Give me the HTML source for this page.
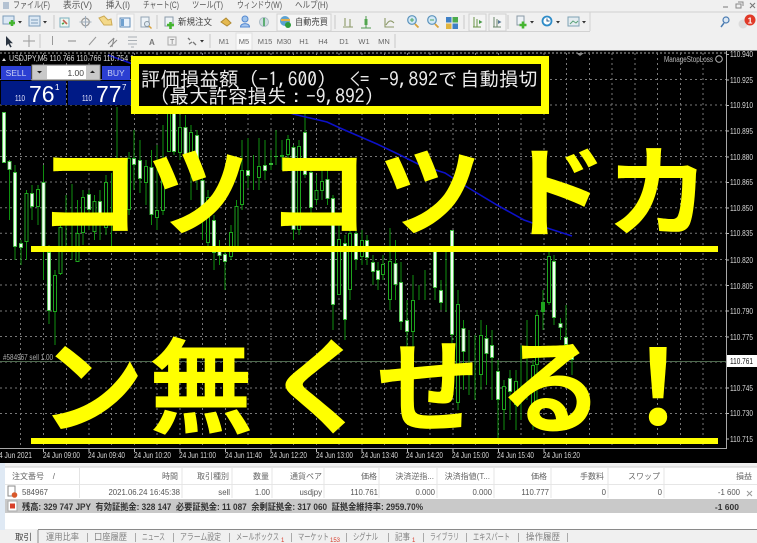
<!DOCTYPE html>
<html lang="ja">
<head>
<meta charset="utf-8">
<title>MT4</title>
<style>
html,body{margin:0;padding:0;background:#f0f0f0;width:757px;height:543px;overflow:hidden}
svg{display:block;position:absolute;left:0;top:0}
.m{font:9px "Liberation Sans","Noto Sans CJK JP",sans-serif;fill:#555}
.s{font:7.5px "Liberation Sans",sans-serif;fill:#666}
.ax{font:7.8px "Liberation Sans",sans-serif;fill:#d8d8d8}
.t{font:7.8px "Liberation Sans",sans-serif;fill:#d8d8d8}
.h{font:8px "Liberation Sans","Noto Sans CJK JP",sans-serif;fill:#666;text-anchor:end}
.r{font:7.8px "Liberation Sans","Noto Sans CJK JP",sans-serif;fill:#555;text-anchor:end}
.b{font:bold 9px "Liberation Sans","Noto Sans CJK JP",sans-serif;fill:#333}
.tb{font:9px "Liberation Sans","Noto Sans CJK JP",sans-serif;fill:#808080}
.big{font:bold 104px "Noto Sans CJK JP",sans-serif;fill:#ffff00}
.bx{font:19.5px "IPAGothic","Noto Sans CJK JP",monospace;fill:#ececec}
</style>
</head>
<body>
<svg width="757" height="543" viewBox="0 0 757 543" xmlns="http://www.w3.org/2000/svg">
<rect width="757" height="543" fill="#f0f0f0"/>

<!-- menu -->
<rect x="3" y="2" width="6" height="7" fill="#b4c2d2"/>
<text class="m" x="13" y="8" textLength="37" lengthAdjust="spacingAndGlyphs">ファイル(F)</text>
<text class="m" x="63" y="8" textLength="29" lengthAdjust="spacingAndGlyphs">表示(V)</text>
<text class="m" x="106" y="8" textLength="24" lengthAdjust="spacingAndGlyphs">挿入(I)</text>
<text class="m" x="143" y="8" textLength="36" lengthAdjust="spacingAndGlyphs">チャート(C)</text>
<text class="m" x="192" y="8" textLength="31" lengthAdjust="spacingAndGlyphs">ツール(T)</text>
<text class="m" x="237" y="8" textLength="45" lengthAdjust="spacingAndGlyphs">ウィンドウ(W)</text>
<text class="m" x="295" y="8" textLength="33" lengthAdjust="spacingAndGlyphs">ヘルプ(H)</text>
<path d="M723 7h5" stroke="#777" stroke-width="1"/>
<path d="M736 4h5v4h-5zM738 2h5v4" fill="none" stroke="#888" stroke-width="1"/>
<path d="M750 3l5 5M755 3l-5 5" stroke="#777" stroke-width="1.1"/>

<!-- toolbars -->
<path d="M0 12H757" stroke="#cfcfcf"/>
<path d="M0 31.5H590M590 12V31" stroke="#d2d2d2" fill="none"/>
<path d="M54 15V29M157 15V29M335 15V29M464 15V29M508 15V29M40 34V48M210 34V48M395 34V48" stroke="#c8c8c8"/>
<rect x="117" y="14" width="17" height="17" fill="#f8f8f8" stroke="#dcdcdc"/>
<rect x="277" y="14" width="54" height="17" fill="#f6f6f6" stroke="#d2d2d2"/>
<rect x="469" y="14" width="17" height="17" fill="#f4f4f4" stroke="#d0d0d0"/>
<rect x="489" y="14" width="17" height="17" fill="#f4f4f4" stroke="#d0d0d0"/>
<rect x="236" y="33" width="16" height="17" fill="#f9f9f9" stroke="#e0e0e0"/>

<!-- row 1 icons -->
<rect x="3" y="16" width="11" height="8" fill="#dbe8f4" stroke="#7d9cba"/>
<path d="M9 23h6M12 20v6" stroke="#45b530" stroke-width="2.6"/>
<path d="M18 21h4l-2 2.5z" fill="#333"/>
<rect x="29" y="16" width="11" height="10" fill="#dbe8f4" stroke="#7d9cba"/>
<path d="M31 20h7M31 23h7" stroke="#7d9cba"/>
<path d="M43 21h4l-2 2.500z" fill="#333"/>
<rect x="60" y="18" width="9" height="9" fill="#eef6ee" stroke="#7bb0c0"/>
<path d="M63 20l4 4" stroke="#c2604f" stroke-width="1.600"/><path d="M62 24l2-1" stroke="#4aa04a" stroke-width="1.600"/>
<circle cx="85.500" cy="22" r="3.800" fill="none" stroke="#999" stroke-width="1.300"/>
<path d="M85.500 16v12M79.500 22h12" stroke="#a0aebc" stroke-width="1.100"/>
<path d="M99 18l5-2 4 4 3-1 1 6h-8l-3-4z" fill="#f4d98a" stroke="#ccaa55"/>
<rect x="120" y="18" width="10" height="9" fill="#e8f1fb" stroke="#5f8cb8"/>
<rect x="121" y="19" width="3" height="7" fill="#6fa0cf"/>
<rect x="141" y="17" width="8" height="10" fill="#eef3f7" stroke="#93a5b5"/>
<circle cx="147" cy="24" r="2.500" fill="#dfeaf2" stroke="#8a98a4"/><path d="M149 26l2.500 2.500" stroke="#d9a23a" stroke-width="1.400"/>
<rect x="165" y="17" width="8" height="9" fill="#eef3f7" stroke="#8a9aa8"/>
<path d="M167 25h7M170.500 22v7" stroke="#45b530" stroke-width="2.600"/>
<text class="m" x="178" y="25" textLength="34" lengthAdjust="spacingAndGlyphs" style="fill:#444">新規注文</text>
<path d="M221 22l5-4 5 5-4 3z" fill="#e5b94f" stroke="#b08a32"/>
<circle cx="245" cy="19" r="3" fill="#a0c4ec" stroke="#5488d0"/>
<path d="M240.500 27c0-4.500 9-4.500 9 0z" fill="#a8c8f0" stroke="#5488d0"/>
<circle cx="264" cy="22" r="4.500" fill="#d0dce2" stroke="#aabac4"/><path d="M264 18v8" stroke="#4fa865" stroke-width="1.800"/>
<circle cx="285" cy="21" r="5" fill="#5aa2d4"/><path d="M281 20h9" stroke="#e4b04c" stroke-width="2.200"/>
<circle cx="288" cy="25" r="3" fill="#2c9b3c"/>
<text class="m" x="295" y="25" textLength="33" lengthAdjust="spacingAndGlyphs" style="fill:#444">自動売買</text>

<path d="M345 18v8M350 19v8M343 27h10" stroke="#8c9868" stroke-width="1.100" fill="none"/>
<rect x="364.500" y="19" width="3" height="6" fill="#55ad4f"/><path d="M366 16v12M361 28h10" stroke="#4f9a4f"/>
<path d="M385 18v9h9M386 25c3-5 5-5 8-2" stroke="#8c9868" fill="none" stroke-width="1.100"/>
<circle cx="412" cy="20" r="4.300" fill="#d2e8f6" stroke="#5a92bc" stroke-width="1.200"/><path d="M415 24l3.500 3.500" stroke="#d9a23a" stroke-width="1.800"/><path d="M410 20h4M412 18v4" stroke="#4fa865"/>
<circle cx="432" cy="20" r="4.300" fill="#d2e8f6" stroke="#5a92bc" stroke-width="1.200"/><path d="M435 24l3.500 3.500" stroke="#d9a23a" stroke-width="1.800"/><path d="M430 20h4" stroke="#4fa865"/>
<rect x="446" y="17" width="5.500" height="5.500" fill="#3f80c6"/><rect x="452.500" y="17" width="5.500" height="5.500" fill="#4cab4c"/><rect x="446" y="23.500" width="5.500" height="5.500" fill="#e0b440"/><rect x="452.500" y="23.500" width="5.500" height="5.500" fill="#3f80c6"/>
<path d="M474 17v10M477 19v8M473 27h8" stroke="#6a9448" fill="none"/><path d="M479 20l3.500 2-3.500 2z" fill="#4a9a4a"/>
<path d="M494 17v10M497 19v8M493 27h8" stroke="#6a866a" fill="none"/><path d="M498 20l3.500 2-3.500 2z" fill="#5a7a96"/>
<rect x="517" y="16" width="7" height="9" fill="#eef3f7" stroke="#8a9aa6"/>
<path d="M519.500 25h7M523 21.500v7" stroke="#45b530" stroke-width="2.600"/>
<path d="M530 21h4l-2 2.500z" fill="#333"/>
<circle cx="547" cy="21" r="4.500" fill="#fff" stroke="#2f8cc8" stroke-width="1.800"/><path d="M547 18.500v2.500h2.500" stroke="#2a5a84" fill="none"/>
<path d="M556 21h4l-2 2.500z" fill="#333"/>
<rect x="568" y="17" width="11" height="9" fill="#e4ecf0" stroke="#7ea2b4"/><path d="M570 24l3-3 3 2 2-2" stroke="#5aa278" fill="none"/>
<path d="M582 21h4l-2 2.500z" fill="#333"/>

<circle cx="726" cy="20" r="3" fill="#dbe8f4" stroke="#4c7cb2" stroke-width="1.200"/><path d="M724 23l-3 4" stroke="#4c7cb2" stroke-width="1.500"/>
<circle cx="743" cy="24" r="4.500" fill="#dcdcdc"/>
<circle cx="750" cy="20" r="5.500" fill="#e03a28"/>
<text x="750" y="23.500" text-anchor="middle" style="font:bold 8.500px 'Liberation Sans',sans-serif;fill:#fff">1</text>

<!-- row 2 icons -->
<path d="M6 36v10l2.300-2.300 2 3.800 1.400-.7-2-3.600h3.200z" fill="#2b3440"/>
<path d="M29 35v12M23 41h12" stroke="#999"/>
<path d="M52.500 36v9" stroke="#999"/>
<path d="M68 41h8" stroke="#888"/>
<path d="M89 45l7-8" stroke="#999"/>
<path d="M108 44l6-6M110 47l7-7M112 47l2-9" stroke="#888" fill="none"/>
<path d="M128 37h9M128 40.500h9M128 44h9M131 47h3" stroke="#a8aeb4"/>
<text x="149" y="45" style="font:bold 8px 'Liberation Sans',sans-serif;fill:#777">A</text>
<rect x="168" y="37" width="8" height="8" fill="none" stroke="#aaa"/>
<text x="170" y="44" style="font:7px 'Liberation Sans',sans-serif;fill:#777">T</text>
<path d="M188 38l2 2M193 42l3 3M189 44l3-2" stroke="#777" stroke-width="1.300"/>
<path d="M200 40h4l-2 2.500z" fill="#333"/>
<text class="s" x="224" y="44" text-anchor="middle">M1</text>
<text class="s" x="244" y="44" text-anchor="middle">M5</text>
<text class="s" x="265" y="44" text-anchor="middle">M15</text>
<text class="s" x="284" y="44" text-anchor="middle">M30</text>
<text class="s" x="304" y="44" text-anchor="middle">H1</text>
<text class="s" x="323" y="44" text-anchor="middle">H4</text>
<text class="s" x="344" y="44" text-anchor="middle">D1</text>
<text class="s" x="364" y="44" text-anchor="middle">W1</text>
<text class="s" x="384" y="44" text-anchor="middle">MN</text>

<!-- chart -->
<rect x="0" y="50" width="757" height="413" fill="#000"/>
<path d="M0 50.500H757" stroke="#888"/>
<path d="M0 53H726" stroke="#aaa" stroke-dasharray="2 2"/>
<path d="M0 79.500H726M0 105H726M0 130.700H726M0 156.500H726M0 182H726M0 207.700H726M0 233.300H726M0 259.500H726M0 285H726M0 311H726M0 336.500H726M0 362H726M0 388H726M0 413.500H726" stroke="#777" stroke-dasharray="2 3"/>
<path d="M20.500 53V448M43.500 53V448M66.500 53V448M89 53V448M111.500 53V448M134.500 53V448M157 53V448M180 53V448M202.500 53V448M225.500 53V448M248 53V448M271 53V448M293.500 53V448M316.500 53V448M339 53V448M362 53V448M384.500 53V448M407.500 53V448M430 53V448M453 53V448M475.500 53V448M498.500 53V448M521 53V448M544 53V448M566.500 53V448M589.500 53V448M612 53V448M635 53V448M657.500 53V448M680.500 53V448M703 53V448" stroke="#777" stroke-dasharray="2 3"/>
<path d="M0 448.500H726M726.500 51V449" stroke="#a8a8a8" fill="none"/>
<path d="M726 54.500h3M726 80h3M726 105.500h3M726 131h3M726 157h3M726 182.500h3M726 208h3M726 233.500h3M726 260h3M726 285.500h3M726 311h3M726 337h3M726 388h3M726 413.500h3M726 439h3M43.500 449v3M89 449v3M134.500 449v3M180 449v3M225.500 449v3M271 449v3M316.500 449v3M362 449v3M407.500 449v3M453 449v3M498.500 449v3M544 449v3" stroke="#bbb"/>
<path d="M0 361.500H726" stroke="#4f6b4f"/>

<!-- wicks -->
<path d="M9.500 160V220M15 165V260M21 240V265M26.500 190V260M32 185V220M38 185V225M43.500 165V280M49 245V324M55 270V345M60.500 222V275M66 195V250M72 184V260M77.500 200V262M83 190V245M89 190V230M94.500 195V240M100 190V240M106 175V235M111.500 173V250M117 107V200M129 152V215M134 130V190M140 140V193M146 160V205M151.500 150V225M157 145V230M163 125V215M169 100V150M174 95V155M180 115V160M185.500 115V160M191 125V200M197 130V190M202.500 175V240M208 190V250M214 215V270M219.500 240V265M225 250V290M231 225V260M236.500 200V250M242 140V210M248 138V188M253.500 155V190M259 138V190M265 140V180M271 150V170M276 130V165M282 140V170M288 135V160M293.500 145V240M299 140V235M305 110V178M311 170V225M316.500 175V205M322 170V200M327.500 170V205M333 195V330M339 225V290M345 235V340M350 225V300M356 225V270M362 230V265M367 235V265M373 255V285M378 262V290M383 255V280M390 228V310M395.500 240V300M401 262V330M407 300V365M413 275V370M419 285V300M425 270V300M435 270V300M441 280V310M446 250V312M452 255V390M458 290V410M463.500 320V390M469 330V395M475 335V400M481 320V390M486.500 325V385M492 330V400M498 360V440M504 380V430M510 370V420M516 370V430M521 345V420M527 320V400M533 360V430M537 310V410M543 290V330M549 250V305M554 255V325M560.500 318V340M566 305V350M572 345V375" stroke="#0f8f0f" stroke-width="1" fill="none"/>
<!-- hollow -->
<path d="M26.500 193V242M38 189V207M55 275V312M60.500 227V274M77.500 233V262M83 197V233M94.500 201V232M106 182V228M117 160V228M129 158V210M146 166V183M157 210V218M163 165V211M169 113V152M180 127V153M191 132V162M208 197V243M231 232V257M236.500 206V250M242 170V205M259 166V178M282 155V157M288 139V155M299 146V230M316.500 190V200M322 181V191M339 239V295M350 233V290M362 240V257M383 264V275M390 261V300M413 300V332M458 304V403M481 335V375M504 386V410M516 381V405M533 365V410M537 315V365M543 302V312M549 256V303" stroke="#1ea51e" stroke-width="4" fill="none"/>
<path d="M26.500 194V241M38 190V206M55 276V311M60.500 228V273M77.500 234V261M83 198V232M94.500 202V231M106 183V227M117 161V227M129 159V209M146 167V182M157 211V217M163 166V210M169 114V151M180 128V152M191 133V161M208 198V242M231 233V256M236.500 207V249M242 171V204M259 167V177M288 140V154M299 147V229M316.500 191V199M322 182V190M339 240V294M350 234V289M362 241V256M383 265V274M390 262V299M413 301V331M458 305V402M481 336V374M504 387V409M516 382V404M533 366V409M537 316V364M549 257V302" stroke="#000" stroke-width="2" fill="none"/>
<!-- filled -->
<path d="M4 112V163M9.500 161V170M15 172V247M21 243V248M32 193V207M43.500 182V248M49 252V311M89 194V210M100 201V225M134 158V165M140 160V179M151.500 167V215M174 113V152M185.500 127V155M197 135V163M202.500 180V210M214 220V253M219.500 250V256M225 254V262M248 170V176M265 165V171M271 163V165M276 156V157M293.500 147V230M305 132V175M311 172V208M327.500 179V199M333 198V305M345 243V320M356 233V260M367 240V258M373 262V272M378 270V280M395.500 263V285M401 282V322M407 320V332M435 250V288M441 290V303M452 230V335M463.500 328V352M486.500 338V354M492 345V358M498 371V400M510 378V392M554 261V318M560.500 323V328M566 337V345M572 352V360" stroke="#3bbb3b" stroke-width="4" fill="none"/>
<path d="M4 113V162M9.500 162V169M15 173V246M21 244V247M32 194V206M43.500 183V247M49 253V310M89 195V209M100 202V224M134 159V164M140 161V178M151.500 168V214M174 114V151M185.500 128V154M197 136V162M202.500 181V209M214 221V252M219.500 251V255M225 255V261M248 171V175M265 166V170M293.500 148V229M305 133V174M311 173V207M327.500 180V198M333 199V304M345 244V319M356 234V259M367 241V257M373 263V271M378 271V279M395.500 264V284M401 283V321M407 321V331M435 251V287M441 291V302M452 231V334M463.500 329V351M486.500 339V353M492 346V357M498 372V399M510 379V391M554 262V317M560.500 324V327M566 338V344M572 353V359" stroke="#f4fff4" stroke-width="2.400" fill="none"/>

<!-- blue line -->
<path d="M108 55L130 63L293 114L327 122L340 128L377 144L400 155L420 165L445 173L467 187L497 205L524 220L544 227L572 236" stroke="#0c10c8" stroke-width="1.600" fill="none"/>

<!-- chart header / labels -->
<path d="M2 61l2-3 2 3z" fill="#ddd"/>
<text class="t" x="9" y="61" textLength="125" lengthAdjust="spacingAndGlyphs">USDJPY,M5  110.766 110.766 110.754 1</text>
<text class="t" x="664" y="62" textLength="49" lengthAdjust="spacingAndGlyphs" style="fill:#bbb">ManageStopLoss</text>
<circle cx="719" cy="59" r="3.300" fill="none" stroke="#bbb"/>
<path d="M576 53h8l-4 3z" fill="#888"/>
<text class="t" x="3" y="360" textLength="50" lengthAdjust="spacingAndGlyphs" style="fill:#aaa">#584967 sell 1.00</text>

<!-- one-click panel -->
<rect x="1" y="66" width="30" height="14" fill="#2b3fd2"/>
<text x="16" y="76" text-anchor="middle" style="font:8.500px 'Liberation Sans',sans-serif;fill:#c8d0f4">SELL</text>
<rect x="32" y="65" width="68" height="15" fill="#c9c9c9" stroke="#999"/>
<rect x="47" y="66" width="39" height="13" fill="#fff"/>
<text x="84" y="76" text-anchor="end" style="font:8.500px 'Liberation Sans',sans-serif;fill:#444">1.00</text>
<path d="M37 71h5l-2.500 2.500z" fill="#222"/>
<path d="M90 73h5l-2.500-2.500z" fill="#222"/>
<rect x="102" y="66" width="28" height="14" fill="#2b3fd2"/>
<text x="116" y="76" text-anchor="middle" style="font:8.500px 'Liberation Sans',sans-serif;fill:#c8d0f4">BUY</text>
<rect x="1" y="81" width="65" height="24" fill="#001a86"/>
<rect x="68" y="81" width="63" height="24" fill="#001a86"/>
<text x="15" y="101" textLength="10" lengthAdjust="spacingAndGlyphs" style="font:8px 'Liberation Sans',sans-serif;fill:#e8e8ff">110</text>
<text x="29" y="102" style="font:23px 'Liberation Sans',sans-serif;fill:#fff">76</text>
<text x="55" y="90" style="font:8px 'Liberation Sans',sans-serif;fill:#fff">1</text>
<text x="82" y="101" textLength="10" lengthAdjust="spacingAndGlyphs" style="font:8px 'Liberation Sans',sans-serif;fill:#e8e8ff">110</text>
<text x="96" y="102" style="font:23px 'Liberation Sans',sans-serif;fill:#fff">77</text>
<text x="122" y="90" style="font:8px 'Liberation Sans',sans-serif;fill:#fff">7</text>

<!-- axis labels -->
<text class="ax" x="730" y="57" textLength="23" lengthAdjust="spacingAndGlyphs">110.940</text>
<text class="ax" x="730" y="83" textLength="23" lengthAdjust="spacingAndGlyphs">110.925</text>
<text class="ax" x="730" y="108" textLength="23" lengthAdjust="spacingAndGlyphs">110.910</text>
<text class="ax" x="730" y="134" textLength="23" lengthAdjust="spacingAndGlyphs">110.895</text>
<text class="ax" x="730" y="160" textLength="23" lengthAdjust="spacingAndGlyphs">110.880</text>
<text class="ax" x="730" y="185" textLength="23" lengthAdjust="spacingAndGlyphs">110.865</text>
<text class="ax" x="730" y="211" textLength="23" lengthAdjust="spacingAndGlyphs">110.850</text>
<text class="ax" x="730" y="236" textLength="23" lengthAdjust="spacingAndGlyphs">110.835</text>
<text class="ax" x="730" y="263" textLength="23" lengthAdjust="spacingAndGlyphs">110.820</text>
<text class="ax" x="730" y="289" textLength="23" lengthAdjust="spacingAndGlyphs">110.805</text>
<text class="ax" x="730" y="314" textLength="23" lengthAdjust="spacingAndGlyphs">110.790</text>
<text class="ax" x="730" y="340" textLength="23" lengthAdjust="spacingAndGlyphs">110.775</text>
<rect x="727" y="355" width="30" height="12" fill="#fff"/>
<text x="730" y="364" textLength="23" lengthAdjust="spacingAndGlyphs" style="font:7.800px 'Liberation Sans',sans-serif;fill:#111">110.761</text>
<text class="ax" x="730" y="391" textLength="23" lengthAdjust="spacingAndGlyphs">110.745</text>
<text class="ax" x="730" y="416" textLength="23" lengthAdjust="spacingAndGlyphs">110.730</text>
<text class="ax" x="730" y="442" textLength="23" lengthAdjust="spacingAndGlyphs">110.715</text>

<!-- time labels -->
<text class="t" x="-1" y="458" textLength="33" lengthAdjust="spacingAndGlyphs">4 Jun 2021</text>
<text class="t" x="43" y="458" textLength="37" lengthAdjust="spacingAndGlyphs">24 Jun 09:00</text>
<text class="t" x="88" y="458" textLength="37" lengthAdjust="spacingAndGlyphs">24 Jun 09:40</text>
<text class="t" x="134" y="458" textLength="37" lengthAdjust="spacingAndGlyphs">24 Jun 10:20</text>
<text class="t" x="179" y="458" textLength="37" lengthAdjust="spacingAndGlyphs">24 Jun 11:00</text>
<text class="t" x="225" y="458" textLength="37" lengthAdjust="spacingAndGlyphs">24 Jun 11:40</text>
<text class="t" x="270" y="458" textLength="37" lengthAdjust="spacingAndGlyphs">24 Jun 12:20</text>
<text class="t" x="316" y="458" textLength="37" lengthAdjust="spacingAndGlyphs">24 Jun 13:00</text>
<text class="t" x="361" y="458" textLength="37" lengthAdjust="spacingAndGlyphs">24 Jun 13:40</text>
<text class="t" x="406" y="458" textLength="37" lengthAdjust="spacingAndGlyphs">24 Jun 14:20</text>
<text class="t" x="452" y="458" textLength="37" lengthAdjust="spacingAndGlyphs">24 Jun 15:00</text>
<text class="t" x="497" y="458" textLength="37" lengthAdjust="spacingAndGlyphs">24 Jun 15:40</text>
<text class="t" x="543" y="458" textLength="37" lengthAdjust="spacingAndGlyphs">24 Jun 16:20</text>

<!-- yellow overlay box -->
<rect x="135" y="60" width="410" height="50" fill="#000" stroke="#ffff00" stroke-width="8"/>
<text class="bx" x="141" y="86">評価損益額</text>
<text class="bx" x="239" y="86">（-1,600）</text>
<text class="bx" x="350" y="86">&lt;= -9,892</text>
<text class="bx" x="438" y="86">で</text>
<text class="bx" x="460" y="86">自動損切</text>
<text class="bx" x="150" y="103">（最大許容損失：-9,892）</text>

<!-- big text -->
<rect x="31" y="246" width="687" height="6" fill="#ffff00"/>
<rect x="31" y="438" width="687" height="6" fill="#ffff00"/>
<g transform="translate(0,228.400) scale(1,.96)"><text class="big" x="37 146 266 378 503 606" y="0">コツコツドカ</text></g>
<text class="big" x="40 149 267 376 499 606" y="425">ン無くせる！</text>

<!-- terminal -->
<rect x="0" y="463" width="757" height="80" fill="#f0f0f0"/>
<rect x="0" y="463" width="5" height="67" fill="#dfe9f4"/>
<rect x="5" y="467" width="752" height="62" fill="#fff"/>
<path d="M5 467H757" stroke="#cfcfcf"/>
<path d="M5 484.500H757" stroke="#e6e6e6"/>
<path d="M79.500 468V498M182 468V498M232 468V498M272 468V498M324 468V498M379 468V498M437 468V498M494 468V498M551 468V498M608 468V498M664 468V498" stroke="#e4e4e4"/>
<text class="h" x="44" y="479">注文番号</text>
<text class="h" x="55" y="479">/</text>
<text class="h" x="178" y="479">時間</text>
<text class="h" x="229" y="479">取引種別</text>
<text class="h" x="269" y="479">数量</text>
<text class="h" x="322" y="479">通貨ペア</text>
<text class="h" x="377" y="479">価格</text>
<text class="h" x="434" y="479">決済逆指...</text>
<text class="h" x="490" y="479">決済指値(T...</text>
<text class="h" x="547" y="479">価格</text>
<text class="h" x="604" y="479">手数料</text>
<text class="h" x="660" y="479">スワップ</text>
<text class="h" x="752" y="479">損益</text>

<rect x="8" y="486" width="7" height="10" fill="#fff" stroke="#8a8a8a"/>
<circle cx="14.500" cy="495" r="2.800" fill="#d8582a"/>
<text x="22" y="495" style="font:7.800px 'Liberation Sans',sans-serif;fill:#555">584967</text>
<text class="r" x="180" y="495">2021.06.24 16:45:38</text>
<text class="r" x="230" y="495">sell</text>
<text class="r" x="270" y="495">1.00</text>
<text class="r" x="322" y="495">usdjpy</text>
<text class="r" x="378" y="495">110.761</text>
<text class="r" x="435" y="495">0.000</text>
<text class="r" x="492" y="495">0.000</text>
<text class="r" x="549" y="495">110.777</text>
<text class="r" x="606" y="495">0</text>
<text class="r" x="662" y="495">0</text>
<text class="r" x="740" y="495">-1 600</text>
<path d="M747 491l5 5M752 491l-5 5" stroke="#999"/>

<rect x="5" y="499" width="752" height="14" fill="#c9c9c9"/>
<rect x="8" y="501" width="9" height="10" fill="#fff" stroke="#aaa"/>
<rect x="10" y="503.500" width="5" height="5" fill="#d8402a"/>
<text class="b" x="22" y="510" textLength="401" lengthAdjust="spacingAndGlyphs">残高: 329 747 JPY&#160;&#160;有効証拠金: 328 147&#160;&#160;必要証拠金: 11 087&#160;&#160;余剰証拠金: 317 060&#160;&#160;証拠金維持率: 2959.70%</text>
<text class="b" x="739" y="510" text-anchor="end" style="font-size:8.500px">-1 600</text>

<path d="M38 529.500H757" stroke="#8a8a8a"/>
<path d="M38 530V543" stroke="#8a8a8a"/>
<text x="15" y="540" style="font:8.500px 'Liberation Sans','Noto Sans CJK JP',sans-serif;fill:#444">取引</text>
<text class="tb" x="46" y="540" textLength="33" lengthAdjust="spacingAndGlyphs">運用比率</text>
<text class="tb" x="94" y="540" textLength="33" lengthAdjust="spacingAndGlyphs">口座履歴</text>
<text class="tb" x="142" y="540" textLength="23" lengthAdjust="spacingAndGlyphs">ニュース</text>
<text class="tb" x="180" y="540" textLength="41" lengthAdjust="spacingAndGlyphs">アラーム設定</text>
<text class="tb" x="236" y="540" textLength="43" lengthAdjust="spacingAndGlyphs">メールボックス</text>
<text x="281" y="542" style="font:6px 'Liberation Sans',sans-serif;fill:#d83a2a">1</text>
<text class="tb" x="298" y="540" textLength="31" lengthAdjust="spacingAndGlyphs">マーケット</text>
<text x="330" y="542" style="font:6px 'Liberation Sans',sans-serif;fill:#d83a2a">153</text>
<text class="tb" x="353" y="540" textLength="25" lengthAdjust="spacingAndGlyphs">シグナル</text>
<text class="tb" x="395" y="540" textLength="15" lengthAdjust="spacingAndGlyphs">記事</text>
<text x="412" y="542" style="font:6px 'Liberation Sans',sans-serif;fill:#d83a2a">1</text>
<text class="tb" x="430" y="540" textLength="29" lengthAdjust="spacingAndGlyphs">ライブラリ</text>
<text class="tb" x="473" y="540" textLength="37" lengthAdjust="spacingAndGlyphs">エキスパート</text>
<text class="tb" x="526" y="540" textLength="34" lengthAdjust="spacingAndGlyphs">操作履歴</text>
<path d="M87.500 533V542M135.500 533V542M173.500 533V542M229.500 533V542M291.500 533V542M346.500 533V542M388.500 533V542M423.500 533V542M466.500 533V542M518.500 533V542M567.500 533V542" stroke="#aaa"/>
</svg>
</body>
</html>
